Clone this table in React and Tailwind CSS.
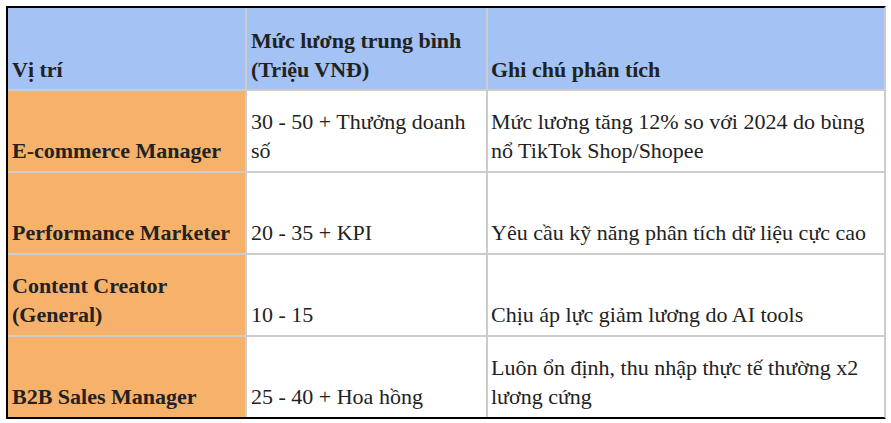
import React from "react";

const rows = [
  ["E-commerce Manager", "30 - 50 + Thưởng doanh số", "Mức lương tăng 12% so với 2024 do bùng nổ TikTok Shop/Shopee"],
  ["Performance Marketer", "20 - 35 + KPI", "Yêu cầu kỹ năng phân tích dữ liệu cực cao"],
  ["Content Creator (General)", "10 - 15", "Chịu áp lực giảm lương do AI tools"],
  ["B2B Sales Manager", "25 - 40 + Hoa hồng", "Luôn ổn định, thu nhập thực tế thường x2 lương cứng"],
];

export default function App() {
  return (
    <div className="w-[891px] h-[423px] overflow-hidden bg-white text-[#222] text-[22px] leading-[29px] font-['Liberation_Serif','Times_New_Roman',serif]">
      <div className="ml-[6px] mt-[6px] w-[880px] border-t-2 border-l-2 border-b-2 border-black border-r-2 border-r-[#cccccc] flex flex-col">
        <div className="grid grid-cols-[239px_241px_1fr] h-[83px] border-b-2 border-[#cccccc] bg-[#a4c2f4] font-bold">
          <div className="border-r-2 border-[#cccccc] px-1 pb-[5px] flex items-end">Vị trí</div>
          <div className="border-r-2 border-[#cccccc] px-1 pb-[5px] flex items-end">Mức lương trung bình (Triệu VNĐ)</div>
          <div className="px-[3px] pb-[5px] flex items-end">Ghi chú phân tích</div>
        </div>
        {rows.map((r, i) => (
          <div key={i} className={"grid grid-cols-[239px_241px_1fr] " + (i < rows.length - 1 ? "h-[82px] border-b-2 border-[#cccccc]" : "h-[80px]")}>
            <div className="bg-[#f6b26b] border-r-2 border-[#cccccc] px-1 pb-[6px] flex items-end font-bold">{r[0]}</div>
            <div className="border-r-2 border-[#cccccc] px-1 pb-[6px] flex items-end">{r[1]}</div>
            <div className="px-[3px] pb-[6px] flex items-end">{r[2]}</div>
          </div>
        ))}
      </div>
      <div className="flex mt-[8px] leading-[22px]">
        <span className="ml-[297px]">ể</span>
        <span className="ml-[235px]">ề</span>
      </div>
    </div>
  );
}
